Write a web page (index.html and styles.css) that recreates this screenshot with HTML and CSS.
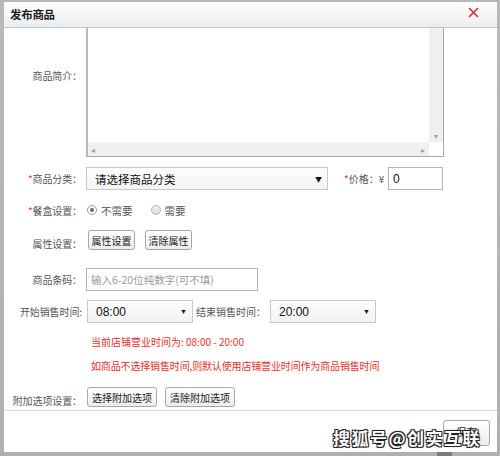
FILE: index.html
```html
<!DOCTYPE html>
<html lang="zh-CN">
<head>
<meta charset="utf-8">
<title>发布商品</title>
<link rel="stylesheet" href="styles.css">
</head>
<body>
<div class="page">
  <div class="dialog">
    <div class="titlebar">
      <span class="title">发布商品</span>
      <svg class="close" width="11" height="11" viewBox="0 0 11 11"><path d="M1 1L10 10M10 1L1 10" stroke="#d42a3a" stroke-width="1.6"/></svg>
    </div>
    <div class="body">
      <div class="row row-intro">
        <div class="label">商品简介：</div>
        <div class="textarea">
          <div class="ta-content"></div>
          <div class="vbar"><span class="arr-down">▾</span></div>
          <div class="hbar"><span class="arr">◂</span><span class="arr">▸</span></div>
          <div class="corner"></div>
        </div>
      </div>
      <div class="row row-cat">
        <div class="label"><span class="req">*</span>商品分类：</div>
        <div class="select select-cat"><span>请选择商品分类</span><span class="caret">▼</span></div>
        <div class="price-label"><span class="req">*</span>价格：¥</div>
        <div class="input input-price">0</div>
      </div>
      <div class="row row-box">
        <div class="label"><span class="req">*</span>餐盒设置：</div>
        <span class="radio checked"></span><span class="opt">不需要</span>
        <span class="radio"></span><span class="opt">需要</span>
      </div>
      <div class="row row-attr">
        <div class="label">属性设置：</div>
        <div class="btn btn-4">属性设置</div>
        <div class="btn btn-4">清除属性</div>
      </div>
      <div class="row row-code">
        <div class="label">商品条码：</div>
        <div class="input input-code placeholder">输入6-20位纯数字(可不填)</div>
      </div>
      <div class="row row-time">
        <div class="label">开始销售时间:</div>
        <div class="select select-time"><span>08:00</span><span class="caret">▼</span></div>
        <div class="mid-label">结束销售时间：</div>
        <div class="select select-time"><span>20:00</span><span class="caret">▼</span></div>
      </div>
      <div class="note note-1">当前店铺营业时间为: 08:00 - 20:00</div>
      <div class="note note-2">如商品不选择销售时间,则默认使用店铺营业时间作为商品销售时间</div>
      <div class="row row-extra">
        <div class="label">附加选项设置：</div>
        <div class="btn btn-6">选择附加选项</div>
        <div class="btn btn-6">清除附加选项</div>
      </div>
    </div>
    <div class="footer">
      <div class="btn save">保存</div>
      <div class="watermark">搜狐号@创实互联</div>
    </div>
  </div>
  <div class="scroll-thumb"></div>
</div>
</body>
</html>
```
FILE: styles.css
```css
* { box-sizing: border-box; }
html, body { margin: 0; padding: 0; }
body {
  width: 500px;
  height: 456px;
  background: #a8a8a8;
  font-family: "Noto Sans CJK SC", "Liberation Sans", sans-serif;
  overflow: hidden;
}
.page {
  position: relative;
  width: 500px;
  height: 456px;
  padding: 2px 3px 4px 4px;
  background: linear-gradient(#b9b9b9, #b0b0b0);
}
.dialog {
  height: 450px;
  background: #fff;
  display: flex;
  flex-direction: column;
  position: relative;
}
.titlebar {
  height: 26px;
  flex: none;
  background: linear-gradient(#ffffff, #ececec);
  border-bottom: 1px solid #b4cadb;
  display: flex;
  align-items: center;
  justify-content: space-between;
  padding: 0 18px 2px 6px;
}
.title {
  font-size: 11.5px;
  font-weight: bold;
  color: #222;
  letter-spacing: -0.3px;
}
.close { display: block; margin-top: -3px; }

.body {
  height: 383px;
  flex: none;
  overflow: hidden;
  border-bottom: 1px solid #dcdcdc;
}
.row {
  display: flex;
  align-items: center;
}
.label {
  width: 78px;
  flex: none;
  text-align: right;
  font-size: 10px;
  color: #555;
  margin-right: 4px;
  white-space: nowrap;
  letter-spacing: -0.1px;
}
.req { color: #e0353a; }

.row-intro { margin-top: -35px; }
.textarea {
  width: 358px;
  height: 164px;
  border: 1px solid #aaa;
  border-left: 2px solid #b8b8b8;
  display: grid;
  grid-template-columns: 1fr 14px;
  grid-template-rows: 1fr 14px;
  background: #fff;
}
.vbar {
  background: #f0f0f0;
  display: flex;
  align-items: flex-end;
  justify-content: center;
  font-size: 8px;
  color: #a0a0a0;
  padding-bottom: 1px;
}
.hbar {
  background: #f0f0f0;
  display: flex;
  align-items: center;
  justify-content: space-between;
  padding: 0 4px 0 3px;
  font-size: 8px;
  color: #a0a0a0;
}
.corner { background: #fff; }

.row-cat { margin-top: 10px; height: 23px; }
.select {
  height: 23px;
  border: 1px solid #c9c9c9;
  background: linear-gradient(#fdfdfd, #f3f3f3);
  display: flex;
  align-items: center;
  justify-content: space-between;
  padding: 0 5px 0 8px;
  font-size: 11.5px;
  color: #111;
}
.caret { font-size: 7px; color: #111; }
.select-cat { width: 242px; }
.price-label {
  margin-left: 16px;
  font-size: 10px;
  color: #555;
  width: 44px;
  white-space: nowrap;
}
.input {
  height: 23px;
  border: 1px solid #b5b5b5;
  display: flex;
  align-items: center;
  padding: 0 4px;
  font-family: "Liberation Sans", "Noto Sans CJK SC", sans-serif;
  font-size: 12px;
  color: #111;
  background: #fff;
}
.input-price { width: 55px; }

.row-box { margin-top: 10px; height: 20px; }
.radio {
  width: 10px;
  height: 10px;
  border-radius: 50%;
  border: 1px solid #b4b4b4;
  background: linear-gradient(#f2f2f2, #dcdcdc);
  margin: 0 4px 0 1px;
  flex: none;
  display: flex;
  align-items: center;
  justify-content: center;
}
.radio.checked { background: #fff; border-color: #999; }
.radio.checked::after {
  content: "";
  width: 4px;
  height: 4px;
  border-radius: 50%;
  background: #666;
}
.opt { font-size: 10.5px; color: #555; margin-right: 17px; }

.row-attr { margin-top: 10px; height: 20px; }
.row-attr .label { margin-top: 6px; }
.btn {
  height: 20px;
  border: 1px solid #a8a8a8;
  border-radius: 3px;
  background: linear-gradient(#ffffff, #ececec);
  display: flex;
  align-items: center;
  justify-content: center;
  font-size: 10px;
  color: #222;
  margin-left: 2px;
}
.btn-4 { width: 47px; margin-right: 8px; }
.btn-6 { width: 70px; margin-right: 6px; }

.row-code { margin-top: 18px; height: 23px; }
.input-code { width: 172px; font-family: "Noto Sans CJK SC", sans-serif; font-size: 10.5px; }
.placeholder { color: #9a9a9a; }

.row-time { margin-top: 9px; height: 23px; }
.row-time .label { margin-right: 5px; }
.select-time { width: 106px; font-family: "Liberation Sans", sans-serif; font-size: 12px; }
.mid-label { font-size: 10px; color: #555; width: 77px; padding-left: 3px; white-space: nowrap; }

.note {
  margin-left: 87px;
  font-size: 10px;
  line-height: 14px;
  color: #e8302c;
  white-space: nowrap;
}
.note-1 { margin-top: 12px; }
.note-2 { margin-top: 10px; letter-spacing: -0.15px; }

.row-extra { margin-top: 14px; height: 20px; }
.row-extra .label { margin-top: 6px; margin-right: 3px; }

.footer {
  flex: 1;
  position: relative;
  display: flex;
  justify-content: flex-end;
  align-items: flex-start;
  padding: 9px 7px 0 0;
}
.save {
  width: 47px;
  height: 26px;
  align-items: flex-start;
  padding-top: 3px;
  font-size: 11px;
}
.watermark {
  position: absolute;
  left: 329px;
  top: 14px;
  font-size: 17px;
  font-weight: bold;
  letter-spacing: 1.5px;
  color: #fff;
  white-space: nowrap;
  text-shadow: -1px -1px 0 #222, 1px -1px 0 #222, -1px 1px 0 #222, 1px 1px 0 #222, 0 0 2px #000;
}
.scroll-thumb {
  position: absolute;
  left: 437px;
  top: 452px;
  width: 15px;
  height: 4px;
  background: #7c7c7c;
}
```
